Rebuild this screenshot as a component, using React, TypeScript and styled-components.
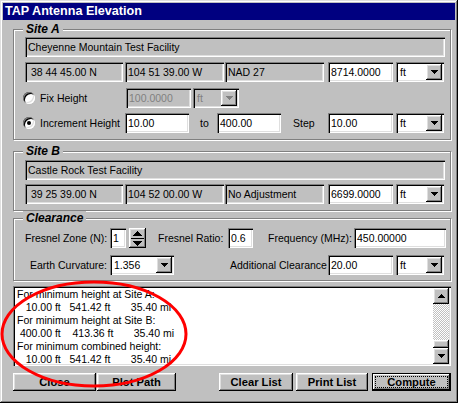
import React from 'react';
import styled, { createGlobalStyle, css } from 'styled-components';

const Global = createGlobalStyle`
  html, body { margin: 0; padding: 0; background: #c0c0c0; }
  body { font-family: "Liberation Sans", Arial, sans-serif; font-size: 10.5px; color: #000; }
  * { box-sizing: border-box; }
`;

const raised = css`
  box-shadow: inset -1px -1px #000, inset 1px 1px #fff, inset -2px -2px #808080, inset 2px 2px #dfdfdf;
`;
const sunken = css`
  box-shadow: inset 1px 1px #808080, inset 2px 2px #000, inset -1px -1px #fff, inset -2px -2px #dfdfdf;
`;

const Window = styled.div`
  position: relative;
  width: 458px;
  height: 403px;
  background: #c0c0c0;
  padding: 3px;
  box-shadow: inset -1px -1px #000, inset 1px 1px #dfdfdf, inset -2px -2px #808080, inset 2px 2px #fff;
  display: flex;
  flex-direction: column;
`;

const TitleBar = styled.div`
  height: 17px;
  background: #000080;
  color: #fff;
  font-weight: bold;
  font-size: 12.6px;
  line-height: 17px;
  padding-left: 2px;
  white-space: nowrap;
`;

const Content = styled.div`
  padding: 0 4px 0 10px;
  display: flex;
  flex-direction: column;
`;

const Group = styled.div<{ $mt: number; $pt: number; $pb: number }>`
  position: relative;
  margin-top: ${p => p.$mt}px;
  border: 1px solid #808080;
  box-shadow: inset 1px 1px #fff, 1px 1px #fff;
  padding: ${p => p.$pt}px 5px ${p => p.$pb}px 11px;
  display: flex;
  flex-direction: column;
`;

const Legend = styled.span`
  position: absolute;
  top: -8px;
  left: 9px;
  padding: 0 3px;
  background: #c0c0c0;
  font-weight: bold;
  font-style: italic;
  font-size: 12px;
  line-height: 15px;
`;

const Row = styled.div<{ $mt?: number }>`
  display: flex;
  align-items: center;
  height: 20px;
  margin-top: ${p => p.$mt ?? 0}px;
`;

const Field = styled.div<{ $w?: number; $ml?: number; $white?: boolean; $disabled?: boolean }>`
  ${p => (p.$w ? `width: ${p.$w}px; flex-shrink: 0;` : 'flex: 1;')}
  height: 20px;
  margin-left: ${p => p.$ml ?? 0}px;
  background: ${p => (p.$white ? '#fff' : '#c0c0c0')};
  ${sunken}
  padding: 0 3px;
  line-height: 20px;
  white-space: pre;
  overflow: hidden;
  color: ${p => (p.$disabled ? '#808080' : '#000')};
`;

const Combo = styled.div<{ $w: number; $ml?: number; $disabled?: boolean }>`
  width: ${p => p.$w}px;
  flex-shrink: 0;
  height: 20px;
  margin-left: ${p => p.$ml ?? 0}px;
  background: ${p => (p.$disabled ? '#c0c0c0' : '#fff')};
  color: ${p => (p.$disabled ? '#808080' : '#000')};
  ${sunken}
  padding: 2px;
  display: flex;
  align-items: center;
`;

const ComboText = styled.span`
  flex: 1;
  padding-left: 2px;
  white-space: pre;
`;

const SmallButton = styled.div<{ $w?: number; $h?: number }>`
  width: ${p => p.$w ?? 16}px;
  height: ${p => p.$h ?? 16}px;
  flex-shrink: 0;
  background: #c0c0c0;
  ${raised}
  display: flex;
  align-items: center;
  justify-content: center;
`;

const Radio = styled.span<{ $checked?: boolean }>`
  width: 12px;
  height: 12px;
  margin-left: -2px;
  flex-shrink: 0;
  border-radius: 50%;
  background: #fff;
  box-shadow: inset 1px 1px #808080, inset -1px -1px #fff, inset 2px 2px #000, inset -2px -2px #dfdfdf;
  display: flex;
  align-items: center;
  justify-content: center;
  &::after {
    content: '';
    width: 4px;
    height: 4px;
    border-radius: 50%;
    background: #000;
    display: ${p => (p.$checked ? 'block' : 'none')};
  }
`;

const Label = styled.span<{ $w?: number; $ml?: number }>`
  margin-left: ${p => p.$ml ?? 0}px;
  ${p => (p.$w ? `width: ${p.$w}px;` : '')}
  flex-shrink: 0;
  white-space: nowrap;
`;

const Spin = styled.div`
  width: 17px;
  height: 20px;
  margin-left: 3px;
  flex-shrink: 0;
  background: #c0c0c0;
  ${raised}
  display: flex;
  flex-direction: column;
  align-items: center;
  justify-content: center;
  gap: 2px;
`;

const SpinDivider = styled.div`
  width: 13px;
  height: 1px;
  background: #000;
`;

const ListBox = styled.div`
  margin-top: 5px;
  height: 80px;
  background: #fff;
  ${sunken}
  padding: 2px;
  display: flex;
`;

const ListText = styled.div`
  flex: 1;
  padding-left: 2px;
  white-space: pre;
  line-height: 13px;
  overflow: hidden;
`;

const ScrollBar = styled.div`
  width: 16px;
  display: flex;
  flex-direction: column;
`;

const Track = styled.div`
  flex: 1;
  background-image: conic-gradient(#fff 25%, #c0c0c0 0 50%, #fff 0 75%, #c0c0c0 0);
  background-size: 2px 2px;
  display: flex;
  flex-direction: column;
  justify-content: flex-end;
`;

const ButtonRow = styled.div`
  margin-top: 7px;
  display: flex;
  height: 18px;
`;

const Button = styled.div<{ $w: number; $ml?: number; $default?: boolean }>`
  width: ${p => p.$w}px;
  height: 18px;
  margin-left: ${p => p.$ml ?? 0}px;
  flex-shrink: 0;
  position: relative;
  font-weight: bold;
  font-size: 11.2px;
  display: flex;
  align-items: center;
  justify-content: center;
  background: #c0c0c0;
  ${p =>
    p.$default
      ? `box-shadow: inset 0 0 0 1px #000, inset -2px -2px #000, inset 2px 2px #fff, inset -3px -3px #808080;`
      : `box-shadow: inset -1px -1px #000, inset 1px 1px #fff, inset -2px -2px #808080, inset 2px 2px #dfdfdf;`}
`;

const FocusRect = styled.span`
  position: absolute;
  inset: 3px 3px 3px 3px;
  border: 1px dotted #000;
  pointer-events: none;
`;

const Annotation = styled.svg`
  position: absolute;
  left: 0;
  top: 0;
  pointer-events: none;
`;

const Arrow = ({ dir = 'down', color = '#000', size = 4 }: { dir?: 'up' | 'down'; color?: string; size?: number }) => {
  const w = size * 2 - 1;
  const rows = Array.from({ length: size }, (_, i) => i);
  return (
    <svg width={w} height={size} viewBox={`0 0 ${w} ${size}`} shapeRendering="crispEdges">
      {rows.map(i => (
        <rect key={i} x={i} y={dir === 'down' ? i : size - 1 - i} width={w - 2 * i} height={1} fill={color} />
      ))}
    </svg>
  );
};

const Dropdown = ({ w, ml, text, disabled }: { w: number; ml?: number; text: string; disabled?: boolean }) => (
  <Combo $w={w} $ml={ml} $disabled={disabled}>
    <ComboText>{text}</ComboText>
    <SmallButton>
      <Arrow color={disabled ? '#808080' : '#000'} />
    </SmallButton>
  </Combo>
);

const listLines = [
  'For minimum height at Site A:',
  '   10.00 ft   541.42 ft       35.40 mi',
  'For minimum height at Site B:',
  ' 400.00 ft    413.36 ft       35.40 mi',
  'For minimum combined height:',
  '   10.00 ft   541.42 ft       35.40 mi',
];

export default function App() {
  return (
    <>
      <Global />
      <Window>
        <TitleBar>TAP Antenna Elevation</TitleBar>
        <Content>
          <Group $mt={9} $pt={7} $pb={6}>
            <Legend>Site A</Legend>
            <Row>
              <Field>Cheyenne Mountain Test Facility</Field>
            </Row>
            <Row $mt={5}>
              <Field $w={98}>{' 38 44 45.00 N'}</Field>
              <Field $w={99} $ml={2}>104 51 39.00 W</Field>
              <Field $w={99} $ml={1}>NAD 27</Field>
              <Field $w={65} $ml={4} $white>8714.0000</Field>
              <Dropdown w={48} ml={3} text="ft" />
            </Row>
            <Row $mt={6}>
              <Radio />
              <Label $ml={5} $w={86}>Fix Height</Label>
              <Field $w={65} $disabled>100.0000</Field>
              <Dropdown w={46} ml={2} text="ft" disabled />
            </Row>
            <Row $mt={5}>
              <Radio $checked />
              <Label $ml={5} $w={85}>Increment Height</Label>
              <Field $w={64} $white>10.00</Field>
              <Label $ml={11} $w={17}>to</Label>
              <Field $w={64} $white>400.00</Field>
              <Label $ml={12} $w={35}>Step</Label>
              <Field $w={65} $white>10.00</Field>
              <Dropdown w={48} ml={3} text="ft" />
            </Row>
          </Group>

          <Group $mt={11} $pt={8} $pb={6}>
            <Legend>Site B</Legend>
            <Row>
              <Field>Castle Rock Test Facility</Field>
            </Row>
            <Row $mt={4}>
              <Field $w={98}>{' 39 25 39.00 N'}</Field>
              <Field $w={99} $ml={2}>104 52 00.00 W</Field>
              <Field $w={99} $ml={1}>No Adjustment</Field>
              <Field $w={65} $ml={4} $white>6699.0000</Field>
              <Dropdown w={48} ml={3} text="ft" />
            </Row>
          </Group>

          <Group $mt={7} $pt={9} $pb={5}>
            <Legend>Clearance</Legend>
            <Row>
              <Label $w={85}>Fresnel Zone (N):</Label>
              <Field $w={16} $white>1</Field>
              <Spin>
                <Arrow dir="up" size={5} />
                <SpinDivider />
                <Arrow dir="down" size={5} />
              </Spin>
              <Label $ml={12} $w={70}>Fresnel Ratio:</Label>
              <Field $w={25} $white>0.6</Field>
              <Label $ml={15} $w={86}>Frequency (MHz):</Label>
              <Field $w={92} $white>450.00000</Field>
            </Row>
            <Row $mt={7}>
              <Label $ml={5} $w={80}>Earth Curvature:</Label>
              <Dropdown w={64} text="1.356" />
              <Label $ml={56} $w={98}>Additional Clearance</Label>
              <Field $w={65} $white>20.00</Field>
              <Dropdown w={48} ml={3} text="ft" />
            </Row>
          </Group>

          <ListBox>
            <ListText>
              {listLines.map((l, i) => (
                <div key={i}>{l}</div>
              ))}
            </ListText>
            <ScrollBar>
              <SmallButton>
                <Arrow dir="up" />
              </SmallButton>
              <Track>
                <SmallButton $h={8} />
              </Track>
              <SmallButton>
                <Arrow />
              </SmallButton>
            </ScrollBar>
          </ListBox>

          <ButtonRow>
            <Button $w={83}>Close</Button>
            <Button $w={79} $ml={1}>Plot Path</Button>
            <Button $w={74} $ml={43}>Clear List</Button>
            <Button $w={72} $ml={3}>Print List</Button>
            <Button $w={79} $ml={4} $default>
              Compute
              <FocusRect />
            </Button>
          </ButtonRow>
        </Content>
        <Annotation width={458} height={403} viewBox="0 0 458 403">
          <ellipse cx={94} cy={334} rx={92} ry={52} fill="none" stroke="#ff0000" strokeWidth={3} />
        </Annotation>
      </Window>
    </>
  );
}
